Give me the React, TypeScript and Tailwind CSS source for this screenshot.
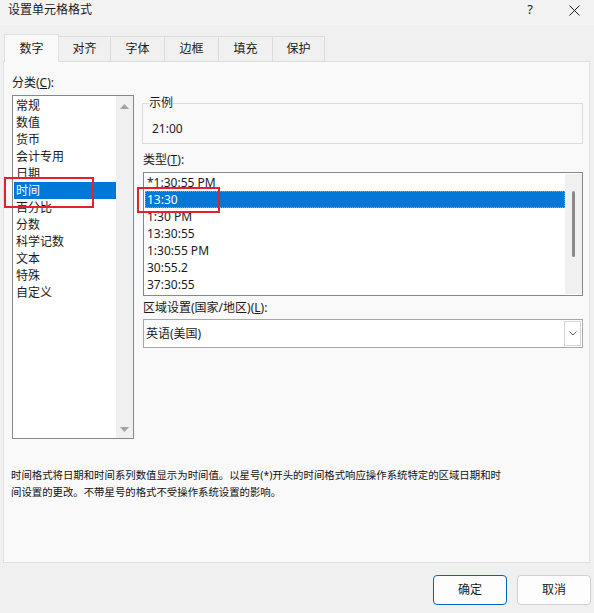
import { FC } from "react";

const categories = [
  "常规",
  "数值",
  "货币",
  "会计专用",
  "日期",
  "时间",
  "百分比",
  "分数",
  "科学记数",
  "文本",
  "特殊",
  "自定义",
];

const types = ["*1:30:55 PM", "13:30", "1:30 PM", "13:30:55", "1:30:55 PM", "30:55.2", "37:30:55"];

const tabs = [
  { label: "数字", width: "w-[55px]" },
  { label: "对齐", width: "w-[52px]" },
  { label: "字体", width: "w-[54px]" },
  { label: "边框", width: "w-[54px]" },
  { label: "填充", width: "w-[54px]" },
  { label: "保护", width: "w-[52px]" },
];

const FormatCellsDialog: FC = () => {
  return (
    <div className="relative w-[594px] h-[613px] bg-[#f0f0f0] flex flex-col text-[12px] text-[#1a1a1a] font-['Noto_Sans','Noto_Sans_CJK_SC',sans-serif] overflow-hidden">
      {/* title bar */}
      <header className="h-[25px] flex items-start justify-between pl-[8px] pr-[14px] pt-[2px] bg-[#f3f3f3]">
        <span className="leading-[16px]">设置单元格格式</span>
        <div className="flex items-start gap-[36px]">
          <span className="leading-[14px] text-[13px]">?</span>
          <svg width="11" height="11" viewBox="0 0 11 11" className="mt-[3px]">
            <path d="M0.5 0.5 L10.5 10.5 M10.5 0.5 L0.5 10.5" stroke="#1a1a1a" strokeWidth="1" />
          </svg>
        </div>
      </header>

      <div className="px-[3px]">
        {/* tabs */}
        <div className="mt-[9px] ml-px h-[28px] flex items-end">
          {tabs.map((tab, i) =>
            i === 0 ? (
              <div
                key={tab.label}
                className={`${tab.width} relative z-10 h-[28px] bg-[#f9f9f9] border border-b-0 border-[#e0e0e0] flex items-center justify-center leading-[16px]`}
              >
                {tab.label}
              </div>
            ) : (
              <div
                key={tab.label}
                className={`${tab.width} h-[26px] bg-[#f0f0f0] border border-l-0 border-[#dcdcdc] flex items-center justify-center leading-[16px] pb-px`}
              >
                {tab.label}
              </div>
            )
          )}
        </div>

        {/* panel */}
        <section className="-mt-px w-[587px] h-[502px] border border-[#e0e0e0] bg-[#f9f9f9] flex flex-col">
          <div className="flex pl-[8px]">
            {/* category column */}
            <div className="w-[122px] pt-[13px]">
              <div className="h-[16px] leading-[16px]">
                分类(<span className="underline">C</span>):
              </div>
              <div className="mt-[4px] h-[344px] border border-[#828790] bg-white flex">
                <ul className="w-[103px] pt-px pl-px">
                  {categories.map((c) => (
                    <li
                      key={c}
                      className={`h-[17px] leading-[17px] pl-[2px] ${c === "时间" ? "bg-[#0078d7] text-white" : ""}`}
                    >
                      {c}
                    </li>
                  ))}
                </ul>
                <div className="w-[17px] bg-[#f0f0f0] flex flex-col items-center justify-between pt-[8px] pb-[6px]">
                  <svg width="9" height="5" viewBox="0 0 9 5">
                    <path d="M4.5 0 L9 5 L0 5 Z" fill="#a3a3a3" />
                  </svg>
                  <svg width="9" height="5" viewBox="0 0 9 5">
                    <path d="M0 0 L9 0 L4.5 5 Z" fill="#a3a3a3" />
                  </svg>
                </div>
              </div>
            </div>

            {/* right column */}
            <div className="ml-[8px] w-[441px] flex flex-col">
              <fieldset className="mt-[33px] border border-[#dcdcdc] px-[6px] pb-[6px]">
                <legend className="leading-[16px] px-0">示例</legend>
                <div className="mt-[10px] h-[16px] leading-[16px] pl-[3px]">21:00</div>
              </fieldset>

              <div className="mt-[8px] h-[16px] leading-[16px] ml-px">
                类型(<span className="underline">T</span>):
              </div>
              <div className="mt-[4px] ml-px w-[440px] h-[124px] border border-[#828790] bg-white flex">
                <ul className="flex-1 pt-px pl-px">
                  {types.map((t) => (
                    <li
                      key={t}
                      className={`h-[17px] leading-[15px] pl-[1px] border border-transparent ${
                        t === "13:30" ? "bg-[#0078d7] text-white border-dotted !border-[#e8903a]" : ""
                      }`}
                    >
                      {t}
                    </li>
                  ))}
                </ul>
                <div className="w-[17px] my-px bg-[#f0f0f0] pl-[7px] pt-[17px]">
                  <div className="w-[3px] h-[66px] rounded-full bg-[#8a8a8a]" />
                </div>
              </div>

              <div className="mt-[4px] h-[16px] leading-[16px] ml-px">
                区域设置(国家/地区)(<span className="underline">L</span>):
              </div>
              <div className="mt-[3px] ml-px w-[440px] h-[29px] border border-[#a8a8a8] bg-white flex items-stretch">
                <div className="flex-1 flex items-center pl-[2px]">英语(美国)</div>
                <div className="w-[17px] my-px mr-px border border-[#d4d4d4] flex items-center justify-center">
                  <svg width="8" height="5" viewBox="0 0 8 5">
                    <path d="M0.5 0.5 L4 4 L7.5 0.5" fill="none" stroke="#606060" strokeWidth="1" />
                  </svg>
                </div>
              </div>
            </div>
          </div>

          <p className="mt-[28px] pl-[7px] text-[10.4px] leading-[17px] text-[#111111]">
            时间格式将日期和时间系列数值显示为时间值。以星号(*)开头的时间格式响应操作系统特定的区域日期和时
            <br />
            间设置的更改。不带星号的格式不受操作系统设置的影响。
          </p>
        </section>

        {/* footer buttons */}
        <footer className="mt-[12px] flex justify-end gap-[10px]">
          <button className="w-[74px] h-[30px] rounded-[4px] border border-[#0067c0] bg-[#fdfdfd] text-[12px]">
            确定
          </button>
          <button className="w-[74px] h-[30px] rounded-[4px] border border-[#d0d0d0] bg-[#fdfdfd] text-[12px]">
            取消
          </button>
        </footer>
      </div>

      {/* red annotation boxes */}
      <div className="absolute left-[4px] top-[177px] w-[90px] h-[31px] border-2 border-[#e5202e]" />
      <div className="absolute left-[137px] top-[187px] w-[83px] h-[26px] border-2 border-[#e5202e]" />
    </div>
  );
};

export default FormatCellsDialog;
